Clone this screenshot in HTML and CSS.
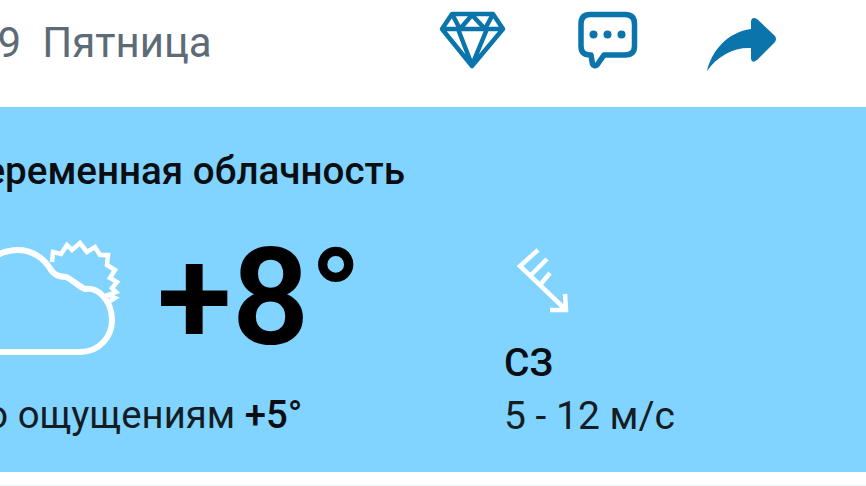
FILE: index.html
```html
<!DOCTYPE html>
<html lang="ru">
<head>
<meta charset="utf-8">
<title>Погода</title>
<link rel="stylesheet" href="styles.css">
</head>
<body>
<div class="page">
  <header class="header">
    <div class="date"><span class="day">19</span><span>Пятница</span></div>
    <svg class="icon diamond" viewBox="438 0 70 107" aria-hidden="true">
      <path class="ln" d="M452 14H493L503 29L472 66L442 29ZM442 29H503M452 14L460 29L472 15L485 29L493 14M458 29L472 65L487 29"/>
    </svg>
    <svg class="icon bubble" viewBox="576 0 64 107" aria-hidden="true">
      <path class="ln" d="M590 14.500H625Q634.500 14.500 634.500 24V46Q634.500 55 625 55H604L597 65Q594 67 592.500 64L591 55H590Q581 55 581 46V24Q581 14.500 590 14.500Z"/>
      <circle class="dot" cx="593.500" cy="34.500" r="4"/>
      <circle class="dot" cx="607.500" cy="34.500" r="4"/>
      <circle class="dot" cx="621.500" cy="34.500" r="4"/>
    </svg>
    <svg class="icon share" viewBox="704 0 76 107" aria-hidden="true">
      <path class="dot" d="M707 71C712 50 728 32 751 29V21Q752 16 757 19L775 36Q777 39 775 42L757 60Q752 64 751 59V48C735 47 718 55 707 71Z"/>
    </svg>
  </header>
  <main class="panel">
    <h1 class="summary">Переменная облачность</h1>
    <div class="weather">
      <div class="now">
        <div class="temp-row">
          <svg class="cloud" viewBox="-30 236 175 124" aria-hidden="true">
            <path class="sl" d="M52 262L53 252L61 254L67 245L72 250L80 243L87 252L95 247L100 255L108 255L107 265L115 270L110 278L117 282L112 288L116 292L108 295L115 298L109 302"/>
            <path class="wl" d="M-30 352H80C100 352 112 336 112 320C112 309 108 301 102 295C97 290 92 288 85 289C78 286 73 280 66 277C60 277 55 276 51 270C44 258 32 250 18 250C0 250-15 260-22 280"/>
          </svg>
          <div class="temp">+8°</div>
        </div>
        <div class="feels">По ощущениям <b>+5°</b></div>
      </div>
      <div class="wind">
        <svg class="arrow" viewBox="510 240 65 75" aria-hidden="true">
          <path class="wt" d="M565 308L520 265L538 249M530 275L547 258M540 284L550 272M565 293L566 309L550 309"/>
        </svg>
        <div class="dir">СЗ</div>
        <div class="speed">5 - 12 м/с</div>
      </div>
    </div>
  </main>
  <div class="rest"></div>
</div>
</body>
</html>
```
FILE: styles.css
```css
html, body {
  margin: 0;
  padding: 0;
  background: #fff;
}
.page {
  width: 866px;
  height: 486px;
  overflow: hidden;
  font-family: Roboto, "Liberation Sans", sans-serif;
  display: flex;
  flex-direction: column;
}
.header {
  height: 107px;
  flex: none;
  display: flex;
  align-items: flex-start;
}
.date {
  width: 438px;
  flex: none;
  margin-left: -26px;
  margin-right: 26px;
  padding-top: 19px;
  display: flex;
  gap: 21px;
  font-size: 42px;
  line-height: 48px;
  color: #5c6b77;
  white-space: nowrap;
}
.icon {
  display: block;
  height: 107px;
  flex: none;
}
.diamond { width: 70px; margin-right: 68px; }
.bubble { width: 64px; margin-right: 64px; }
.share { width: 76px; }
.ln {
  fill: none;
  stroke: #0a74ab;
  stroke-width: 4.500;
  stroke-linejoin: round;
  stroke-linecap: round;
}
.bubble .ln { stroke-width: 5.500; }
.dot { fill: #0a74ab; }
.panel {
  height: 365px;
  flex: none;
  background: #80d4ff;
  color: #000;
  padding-top: 44px;
  box-sizing: border-box;
}
.summary {
  margin: 0 0 0 -43px;
  font-size: 38.600px;
  line-height: 40px;
  font-weight: 500;
  color: #0a0e12;
  white-space: nowrap;
}
.weather {
  display: flex;
}
.now {
  width: 505px;
  flex: none;
}
.temp-row {
  display: flex;
  height: 209px;
}
.cloud {
  width: 175px;
  height: 124px;
  margin: 45px 12px 0 -30px;
  flex: none;
  display: block;
}
.wl, .sl, .wt {
  fill: none;
  stroke: #fff;
  stroke-linejoin: miter;
  stroke-linecap: butt;
}
.wl { stroke-width: 6; stroke-linejoin: round; }
.sl { stroke-width: 4.500; }
.wt { stroke-width: 4.500; }
.temp {
  font-size: 136px;
  line-height: 160px;
  font-weight: 600;
  margin-top: 27px;
  white-space: nowrap;
}
.feels {
  margin-left: -41px;
  font-size: 38.300px;
  line-height: 46px;
  color: #141c24;
  white-space: nowrap;
  margin-top: -8px;
}
.feels b { font-weight: 500; color: #0a0e12; }
.wind {
  padding-top: 50px;
}
.arrow {
  display: block;
  width: 65px;
  height: 75px;
  margin-left: 5px;
}
.dir {
  font-size: 39px;
  line-height: 46px;
  font-weight: 500;
  color: #0a0e12;
  margin: 24px 0 0 -1px;
}
.speed {
  font-size: 39px;
  line-height: 46px;
  color: #141c24;
  margin: 7px 0 0 -1px;
}
.rest {
  flex: 1;
  border-bottom: 1px solid #e6f6fb;
}
```
